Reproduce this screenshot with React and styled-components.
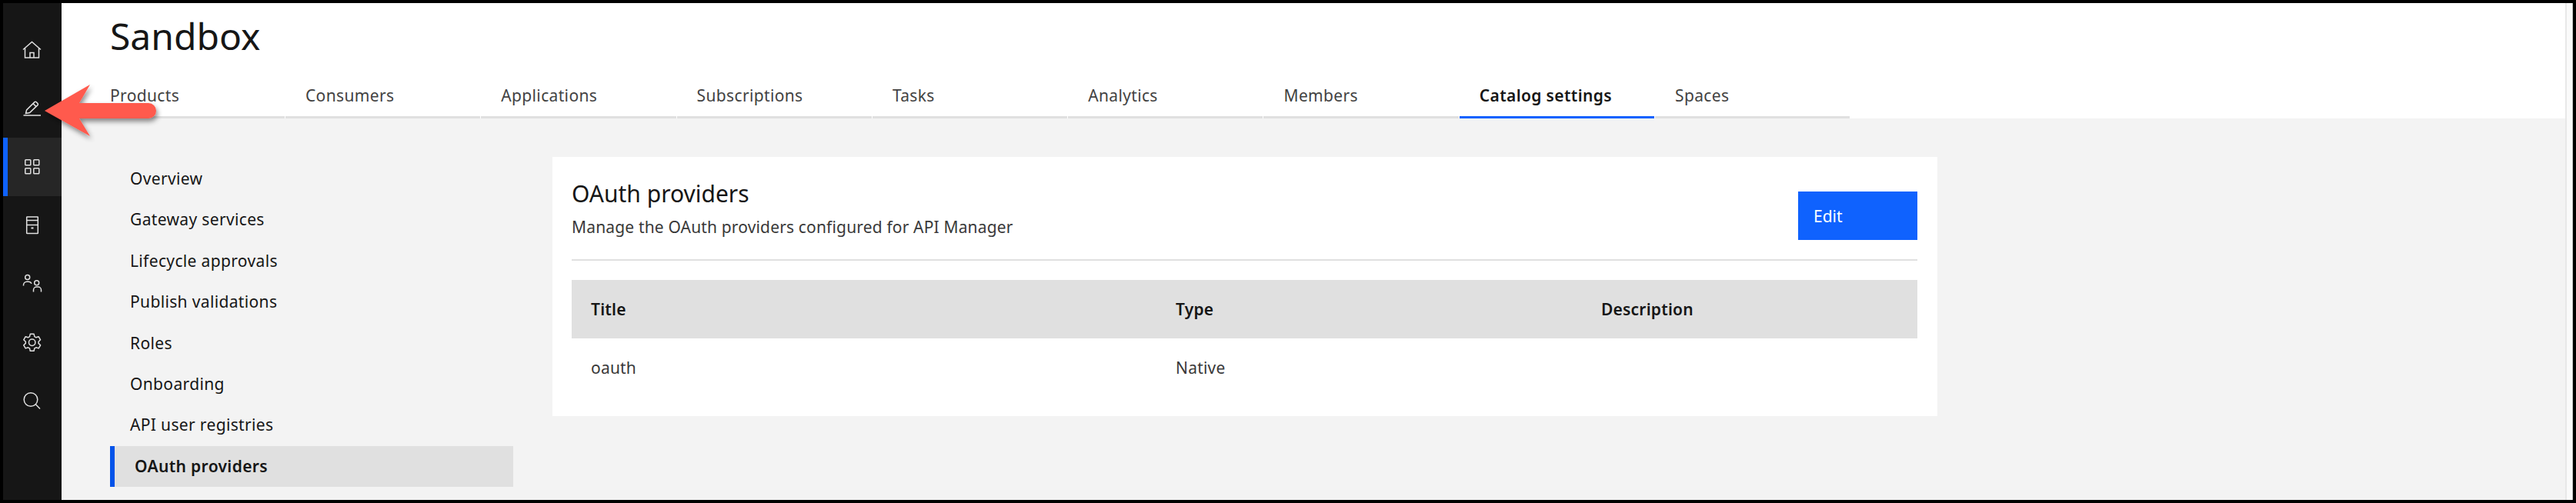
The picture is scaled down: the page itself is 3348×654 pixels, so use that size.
import React from 'react'
import styled, { createGlobalStyle } from 'styled-components'

const GlobalStyle = createGlobalStyle`
  html, body { margin: 0; padding: 0; background: #000; overflow: hidden; }
  * { box-sizing: border-box; }
  body { font-family: "Noto Sans", "Liberation Sans", sans-serif; color: #161616; }
`

const Frame = styled.div`
  position: relative;
  display: flex;
  width: 3348px;
  height: 654px;
  border: 4px solid #000;
  overflow: hidden;
  background: #f3f3f3;
`

const Rail = styled.nav`
  flex: 0 0 76px;
  padding-top: 23px;
  background: #161616;
`

const RailItem = styled.div`
  display: flex;
  align-items: center;
  justify-content: center;
  height: 76px;
  padding-right: 6px;
  background: ${(p) => (p.$active ? '#262626' : 'transparent')};
  border-left: 6px solid ${(p) => (p.$active ? '#0f62fe' : 'transparent')};
  svg {
    width: 32px;
    height: 32px;
    fill: none;
    stroke: #e0e0e0;
    stroke-width: 1.5;
  }
`

const Main = styled.div`
  flex: 1;
  display: flex;
  flex-direction: column;
  min-width: 0;
`

const ScrollTrack = styled.div`
  flex: 0 0 10px;
  background: #fafafa;
  border-left: 2px solid #e8e8e8;
  border-right: 1px solid #c8c8c8;
`

const Header = styled.header`
  flex: 0 0 150px;
  padding: 0 0 0 63px;
  background: #fff;
`

const PageTitle = styled.h1`
  margin: 0;
  height: 88px;
  padding-top: 12px;
  font-size: 48px;
  line-height: 62px;
  font-weight: 400;
  color: #161616;
`

const TabRow = styled.div`
  display: flex;
  gap: 1px;
  height: 62px;
`

const Tab = styled.div`
  width: ${(p) => (p.$first ? '227px' : '253.3px')};
  padding: 17px 0 0 ${(p) => (p.$first ? '0' : '26px')};
  font-size: 21px;
  line-height: 30px;
  letter-spacing: 0.35px;
  font-weight: ${(p) => (p.$active ? 600 : 400)};
  color: ${(p) => (p.$active ? '#161616' : '#424242')};
  border-bottom: 3px solid ${(p) => (p.$active ? '#0f62fe' : '#e0e0e0')};
`

const Body = styled.div`
  display: flex;
  align-items: flex-start;
  gap: 51px;
  padding: 50px 0 0 63px;
`

const SideNav = styled.ul`
  flex: 0 0 524px;
  margin: 0;
  padding: 2px 0 0;
  list-style: none;
`

const SideItem = styled.li`
  height: 53.4px;
  padding-left: 26px;
  font-size: 21px;
  line-height: 53.4px;
  letter-spacing: 0.35px;
  font-weight: ${(p) => (p.$active ? 600 : 400)};
  color: #161616;
  background: ${(p) => (p.$active ? '#e0e0e0' : 'transparent')};
  border-left: ${(p) => (p.$active ? '6px solid #0353e9' : 'none')};
`

const Card = styled.section`
  flex: 0 0 1800px;
  height: 337px;
  padding: 0 26px 0 25px;
  background: #fff;
`

const CardHead = styled.div`
  display: flex;
  justify-content: space-between;
  height: 135px;
  padding-top: 30px;
  border-bottom: 2px solid #e0e0e0;
`

const CardTitle = styled.h2`
  margin: 0;
  font-size: 30px;
  line-height: 36px;
  font-weight: 400;
  color: #161616;
`

const CardText = styled.p`
  margin: 10px 0 0;
  font-size: 21px;
  line-height: 30px;
  letter-spacing: 0.16px;
  color: #393939;
`

const EditButton = styled.button`
  width: 155px;
  height: 63px;
  margin-top: 15px;
  padding: 0 0 0 20px;
  border: 0;
  background: #0f62fe;
  color: #fff;
  text-align: left;
  font-family: inherit;
  font-size: 21px;
`

const Table = styled.div`
  margin-top: 25px;
`

const TableRow = styled.div`
  display: grid;
  grid-template-columns: 760px 553px 1fr;
  align-items: center;
  height: 76px;
  padding-left: 25px;
  background: ${(p) => (p.$head ? '#e0e0e0' : '#fff')};
  font-size: 21px;
  letter-spacing: 0.2px;
  font-weight: ${(p) => (p.$head ? 600 : 400)};
  color: ${(p) => (p.$head ? '#161616' : '#393939')};
`

const Arrow = styled.svg`
  position: absolute;
  left: 46px;
  top: 96px;
  width: 170px;
  height: 100px;
`

const HomeIcon = () => (
  <svg viewBox="0 0 32 32">
    <path d="M4 15.5 15.5 5.5l11.5 10" />
    <path d="M6.5 13.5v12.5h18V13.5" />
    <path d="M13 26v-6.5h5V26" />
  </svg>
)

const PencilIcon = () => (
  <svg viewBox="0 0 32 32">
    <path d="M4.5 25h22.5" />
    <path d="M7.5 22.5 8.6 18 19 7.6a1.4 1.4 0 0 1 2 0l2 2a1.4 1.4 0 0 1 0 2L12.6 21.6z" />
    <path d="m17 9.6 4 4" />
  </svg>
)

const GridIcon = () => (
  <svg viewBox="0 0 32 32">
    <rect x="6.8" y="6.8" width="7" height="7" rx="0.8" />
    <rect x="17.8" y="6.8" width="7" height="7" rx="0.8" />
    <rect x="6.8" y="17.8" width="7" height="7" rx="0.8" />
    <rect x="17.8" y="17.8" width="7" height="7" rx="0.8" />
  </svg>
)

const ServerIcon = () => (
  <svg viewBox="0 0 32 32">
    <rect x="8.7" y="5" width="14.6" height="21.5" rx="0.6" />
    <path d="M8.7 9.5h14.6M8.7 15.5h14.6" />
    <path d="M14.5 19.5h3" strokeWidth="2" />
  </svg>
)

const UsersIcon = () => (
  <svg viewBox="0 0 32 32">
    <circle cx="9.7" cy="7.5" r="3" />
    <path d="M4.5 18.5v-.8a4.5 4.5 0 0 1 4.5-4.5h2a4.5 4.5 0 0 1 4 2.6" />
    <circle cx="21.7" cy="14.8" r="3" />
    <path d="M17.5 26.5v-2.5a4 4 0 0 1 4-4h2a4 4 0 0 1 4 4v2.5" />
  </svg>
)

const GearIcon = () => (
  <svg viewBox="0 0 32 32">
    <circle cx="15.7" cy="16.3" r="4.2" />
    <path d="M13.3 5.3h4.8l.8 3.4 2 1.1 3.3-1.1 2.4 4.1-2.5 2.4v2.2l2.5 2.4-2.4 4.1-3.3-1.1-2 1.1-.8 3.4h-4.8l-.8-3.4-2-1.1-3.3 1.1-2.4-4.1 2.5-2.4v-2.2l-2.5-2.4 2.4-4.1 3.3 1.1 2-1.1z" strokeLinejoin="round" />
  </svg>
)

const SearchIcon = () => (
  <svg viewBox="0 0 32 32">
    <circle cx="14" cy="14.5" r="8.8" />
    <path d="m20.4 20.8 5.6 5.7" />
  </svg>
)

const railIcons = [HomeIcon, PencilIcon, GridIcon, ServerIcon, UsersIcon, GearIcon, SearchIcon]
const tabs = ['Products', 'Consumers', 'Applications', 'Subscriptions', 'Tasks', 'Analytics', 'Members', 'Catalog settings', 'Spaces']
const sideLinks = ['Overview', 'Gateway services', 'Lifecycle approvals', 'Publish validations', 'Roles', 'Onboarding', 'API user registries', 'OAuth providers']

function App() {
  return (
    <Frame>
      <GlobalStyle />
      <Rail>
        {railIcons.map((Icon, i) => (
          <RailItem key={i} $active={i === 2}>
            <Icon />
          </RailItem>
        ))}
      </Rail>
      <Main>
        <Header>
          <PageTitle>Sandbox</PageTitle>
          <TabRow>
            {tabs.map((t, i) => (
              <Tab key={t} $first={i === 0} $active={t === 'Catalog settings'}>{t}</Tab>
            ))}
          </TabRow>
        </Header>
        <Body>
          <SideNav>
            {sideLinks.map((l) => (
              <SideItem key={l} $active={l === 'OAuth providers'}>{l}</SideItem>
            ))}
          </SideNav>
          <Card>
            <CardHead>
              <div>
                <CardTitle>OAuth providers</CardTitle>
                <CardText>Manage the OAuth providers configured for API Manager</CardText>
              </div>
              <EditButton>Edit</EditButton>
            </CardHead>
            <Table>
              <TableRow $head>
                <span>Title</span>
                <span>Type</span>
                <span>Description</span>
              </TableRow>
              <TableRow>
                <span>oauth</span>
                <span>Native</span>
                <span />
              </TableRow>
            </Table>
          </Card>
        </Body>
      </Main>
      <ScrollTrack />
      <Arrow viewBox="0 0 170 100">
        <defs>
          <filter id="arrowShadow" x="-10%" y="-20%" width="125%" height="150%">
            <feDropShadow dx="2" dy="4" stdDeviation="3" floodColor="#000" floodOpacity="0.45" />
          </filter>
        </defs>
        <path
          d="M8 44 67 10 53 34h90a10 10 0 0 1 0 20H53l14 23z"
          fill="#ff5a4d"
          filter="url(#arrowShadow)"
        />
      </Arrow>
    </Frame>
  )
}

export default App
